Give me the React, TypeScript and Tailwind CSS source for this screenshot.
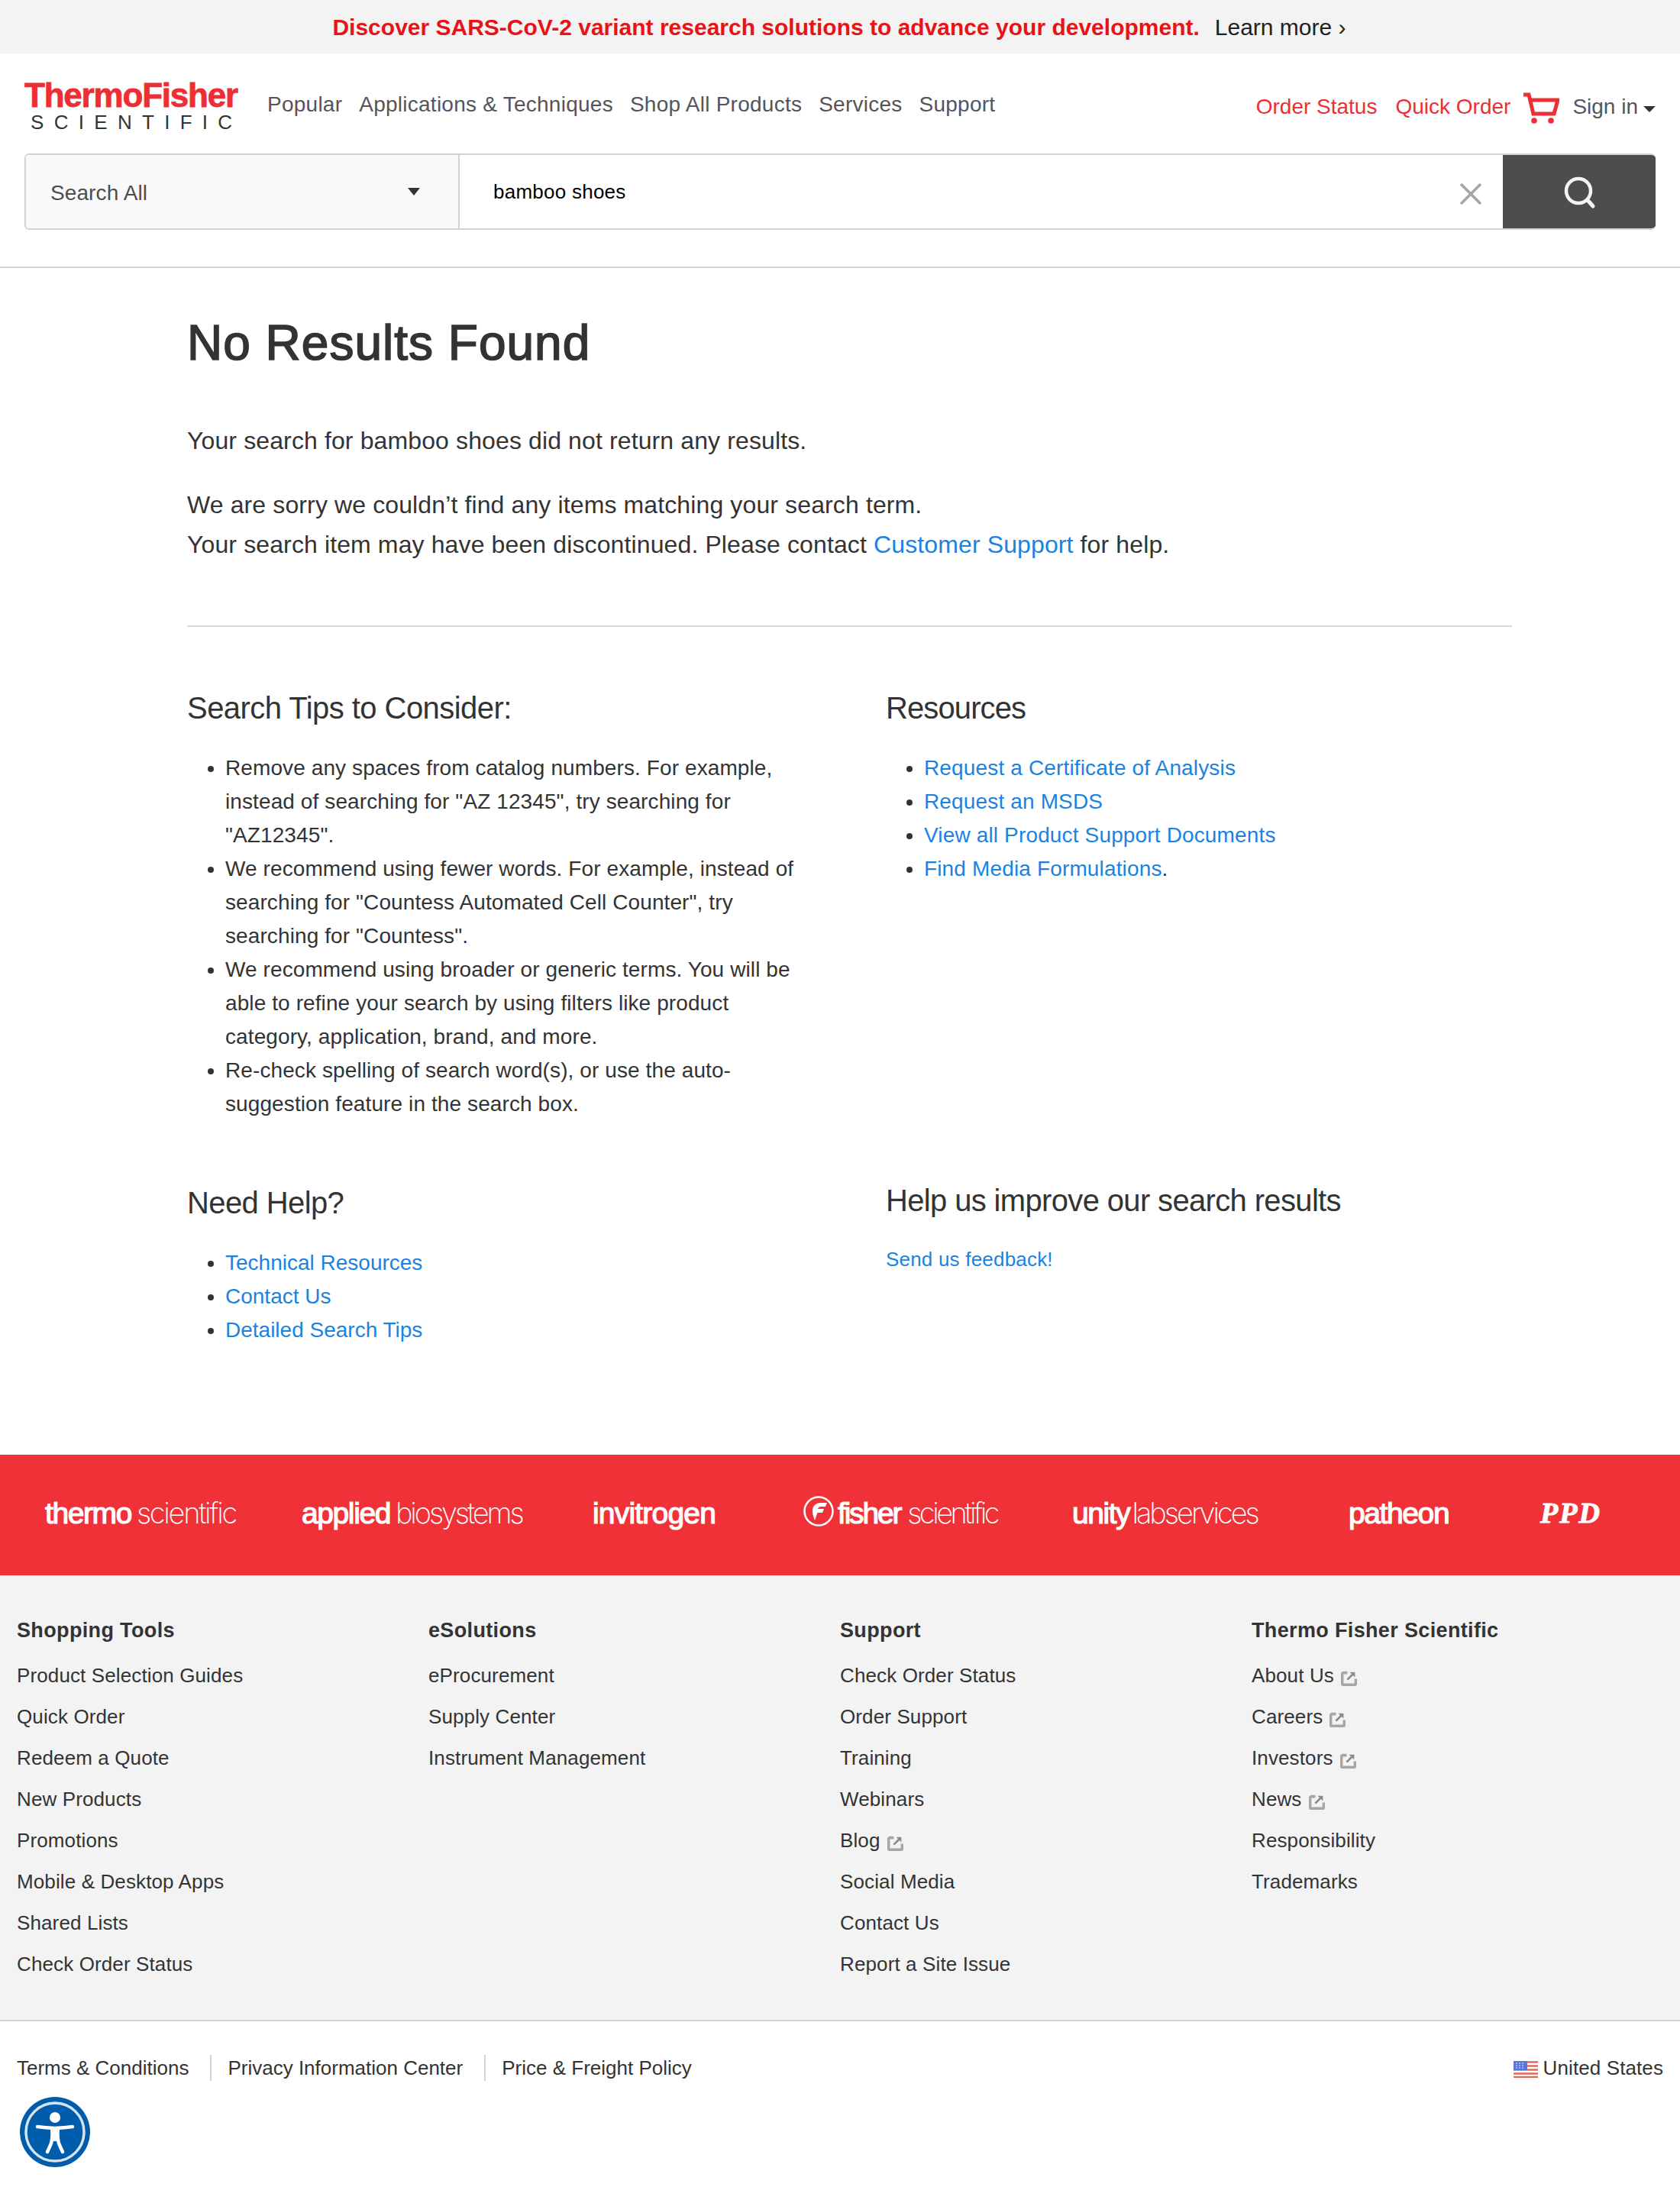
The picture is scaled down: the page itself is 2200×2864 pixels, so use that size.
import React from 'react';

const sans = { fontFamily: '"Liberation Sans", Arial, sans-serif' };

const tips = [
  ['Remove any spaces from catalog numbers. For example,', 'instead of searching for "AZ 12345", try searching for', '"AZ12345".'],
  ['We recommend using fewer words. For example, instead of', 'searching for "Countess Automated Cell Counter", try', 'searching for "Countess".'],
  ['We recommend using broader or generic terms. You will be', 'able to refine your search by using filters like product', 'category, application, brand, and more.'],
  ['Re-check spelling of search word(s), or use the auto-', 'suggestion feature in the search box.'],
];

const footerCols: { title: string; links: [string, boolean?][] }[] = [
  {
    title: 'Shopping Tools',
    links: [['Product Selection Guides'], ['Quick Order'], ['Redeem a Quote'], ['New Products'], ['Promotions'], ['Mobile & Desktop Apps'], ['Shared Lists'], ['Check Order Status']],
  },
  { title: 'eSolutions', links: [['eProcurement'], ['Supply Center'], ['Instrument Management']] },
  {
    title: 'Support',
    links: [['Check Order Status'], ['Order Support'], ['Training'], ['Webinars'], ['Blog', true], ['Social Media'], ['Contact Us'], ['Report a Site Issue']],
  },
  {
    title: 'Thermo Fisher Scientific',
    links: [['About Us', true], ['Careers', true], ['Investors', true], ['News', true], ['Responsibility'], ['Trademarks']],
  },
];

const ExternalIcon = () => (
  <svg width="21" height="21" viewBox="0 0 20 20" fill="none" className="ml-[9px] mt-[7px] inline-block shrink-0">
    <path d="M8 3.500H3.500a2 2 0 0 0-2 2v11a2 2 0 0 0 2 2h13a2 2 0 0 0 2-2V11" stroke="#a6a6a6" strokeWidth="3.500" />
    <path d="M8 12l7-7" stroke="#8a8a8a" strokeWidth="2.500" />
    <path d="M11 2.500h6.500V9z" fill="#8a8a8a" />
  </svg>
);

const Brand = ({ bold, light, className, boldClass, lightClass }: { bold: string; light?: string; className: string; boldClass: string; lightClass?: string }) => (
  <div className={`flex items-baseline whitespace-nowrap text-[39px] leading-none text-white ${className}`}>
    <span className={`[-webkit-text-stroke:1.2px_#fff] ${boldClass}`} style={sans}>{bold}</span>
    {light && <span className={`font-[Inter] text-[38px] font-extralight ${lightClass}`}>{light}</span>}
  </div>
);

const App: React.FC = () => {
  return (
    <div className="relative h-[2864px] w-[2200px] overflow-hidden bg-white text-[#333]" style={sans}>
      <div className="flex h-[70px] items-center justify-center bg-[#f3f3f3] pr-[2px]">
        <span className="text-[30px] font-bold text-[#e71316]">Discover SARS-CoV-2 variant research solutions to advance your development.</span>
        <span className="ml-[20px] text-[30px] text-[#222]">Learn more ›</span>
      </div>

      <header className="border-b-2 border-[#d2d2d2] px-[32px] pb-[48px]">
        <div className="flex h-[131px] items-start">
          <div className="mt-[35px] w-[281px] shrink-0">
            <div className="whitespace-nowrap text-[44px] font-bold leading-[40px] tracking-[-1.2px] text-[#ee2e36] [-webkit-text-stroke:0.8px_#ee2e36]">ThermoFisher</div>
            <div className="mt-[3px] whitespace-nowrap pl-[8px] text-[26px] leading-[24px] tracking-[13.3px] text-[#333]">SCIENTIFIC</div>
          </div>
          <nav className="ml-[37px] mt-[50px] flex gap-[22px] text-[28px] leading-[34px] tracking-[0.25px] text-[#54545c]">
            <span>Popular</span>
            <span>Applications &amp; Techniques</span>
            <span>Shop All Products</span>
            <span>Services</span>
            <span>Support</span>
          </nav>
          <div className="ml-auto mt-[50px] flex items-start text-[28px] leading-[40px]">
            <span className="text-[#ee2e36]">Order Status</span>
            <span className="ml-[24px] text-[#ee2e36]">Quick Order</span>
            <svg width="48" height="42" viewBox="0 0 48 42" fill="none" className="ml-[16px] mt-[1px]">
              <path d="M1 3h7l6 25h27l5-18H9" stroke="#ee2e36" strokeWidth="5" />
              <circle cx="15" cy="37" r="3.800" fill="#ee2e36" />
              <circle cx="37" cy="37" r="3.800" fill="#ee2e36" />
            </svg>
            <span className="ml-[17px] text-[#54545c]">Sign in</span>
            <span className="ml-[7px] mt-[19px] h-0 w-0 border-x-[8px] border-t-[8px] border-x-transparent border-t-[#333]" />
          </div>
        </div>

        <div className="flex h-[100px] overflow-hidden rounded-[6px] border-2 border-r-0 border-[#d2d2d2]">
          <div className="flex w-[568px] shrink-0 items-center justify-between border-r-2 border-[#d2d2d2] bg-[#f9f9f9] pl-[32px] pr-[50px]">
            <span className="mt-[3px] text-[28px] tracking-[0.1px] text-[#4d4d4d]">Search All</span>
            <span className="h-0 w-0 border-x-[8px] border-t-[10px] border-x-transparent border-t-[#333]" />
          </div>
          <div className="flex flex-1 items-center justify-between pl-[44px] pr-[27px] text-[26px] tracking-[0.25px] text-black">
            <span>bamboo shoes</span>
            <svg width="30" height="30" viewBox="0 0 30 30" className="mt-[6px]">
              <path d="M2 2l26 26M28 2L2 28" stroke="#a4a4a4" strokeWidth="3.500" />
            </svg>
          </div>
          <div className="-my-[2px] flex w-[200px] shrink-0 items-center justify-center bg-[#4d4d4d]">
            <svg width="44" height="46" viewBox="0 0 44 46" fill="none">
              <circle cx="21" cy="22" r="16" stroke="#f4f4f4" strokeWidth="4.500" />
              <path d="M33 34l7 8" stroke="#f4f4f4" strokeWidth="5" strokeLinecap="round" />
            </svg>
          </div>
        </div>
      </header>

      <main className="ml-[245px] w-[1735px]">
        <h1 className="mt-[60px] text-[64px] font-normal leading-[76px] tracking-[1px] text-[#333] [-webkit-text-stroke:1.6px_#333]">No Results Found</h1>
        <p className="mt-[64px] text-[32px] leading-[52px] tracking-[0.12px]">Your search for bamboo shoes did not return any results.</p>
        <p className="mt-[32px] text-[32px] leading-[52px] tracking-[0.12px]">
          We are sorry we couldn’t find any items matching your search term.
          <br />
          Your search item may have been discontinued. Please contact <span className="text-[#1a83e2]">Customer Support</span> for help.
        </p>
        <div className="mt-[80px] h-[2px] bg-[#d9d9d9]" />

        <div className="mt-[78px] grid grid-cols-[915px_1fr]">
          <div>
            <h2 className="text-[40px] leading-[56px] tracking-[-0.55px]">Search Tips to Consider:</h2>
            <ul className="mt-[29px] list-disc pl-[50px] text-[28px] leading-[44px] tracking-[0.1px] marker:text-[#333]">
              {tips.map((lines, i) => (
                <li key={i}>
                  {lines.map((l, j) => (
                    <div key={j} className="whitespace-nowrap">{l}</div>
                  ))}
                </li>
              ))}
            </ul>
            <h2 className="mt-[79px] text-[40px] leading-[56px] tracking-[-0.6px]">Need Help?</h2>
            <ul className="mt-[29px] list-disc pl-[50px] text-[28px] leading-[44px] text-[#1a83e2] marker:text-[#333]">
              <li>Technical Resources</li>
              <li>Contact Us</li>
              <li>Detailed Search Tips</li>
            </ul>
          </div>
          <div>
            <h2 className="text-[40px] leading-[56px] tracking-[-0.9px]">Resources</h2>
            <ul className="mt-[29px] h-[560px] list-disc pl-[50px] text-[28px] leading-[44px] tracking-[0.15px] text-[#1a83e2] marker:text-[#333]">
              <li>Request a Certificate of Analysis</li>
              <li>Request an MSDS</li>
              <li>View all Product Support Documents</li>
              <li>Find Media Formulations<span className="text-[#333]">.</span></li>
            </ul>
            <h2 className="text-[40px] leading-[56px] tracking-[-0.65px]">Help us improve our search results</h2>
            <div className="mt-[29px] text-[26px] leading-[40px] tracking-[0.2px] text-[#1a83e2]">Send us feedback!</div>
          </div>
        </div>
      </main>

      <div className="absolute inset-x-0 top-[1905px]">
        <div className="flex h-[158px] items-center bg-[#f03238] pb-[6px] pl-[59px]">
          <Brand bold="thermo" light="scientific" className="w-[336px]" boldClass="tracking-[-1.4px]" lightClass="ml-[7px] tracking-[-2.3px]" />
          <Brand bold="applied" light="biosystems" className="w-[381px]" boldClass="tracking-[-1.4px]" lightClass="ml-[7px] tracking-[-3.1px]" />
          <Brand bold="invitrogen" className="w-[276px]" boldClass="tracking-[-0.8px]" />
          <svg width="40" height="40" viewBox="0 0 40 40" fill="none" className="mb-[4px] mr-[5px]">
            <circle cx="20" cy="20" r="18.500" stroke="#fff" strokeWidth="2.500" />
            <path d="M12 20c0-7 4-11 11-11h8l-2 5h-6c-2 0-3.500 1-4 3h8l-2 5h-6.500l-3.500 10-2.500-7z" fill="#fff" />
          </svg>
          <Brand bold="fisher" light="scientific" className="w-[307px]" boldClass="tracking-[-2.2px]" lightClass="ml-[9px] tracking-[-3.5px]" />
          <Brand bold="unity" light="labservices" className="w-[362px]" boldClass="tracking-[-1.4px]" lightClass="ml-[3px] tracking-[-3px]" />
          <Brand bold="patheon" className="w-[251px]" boldClass="tracking-[-1.4px]" />
          <span className="text-[38px] font-bold italic tracking-[2px] text-white [-webkit-text-stroke:1px_#fff]" style={{ fontFamily: '"Liberation Serif", serif' }}>PPD</span>
        </div>

        <footer className="grid h-[582px] grid-cols-[repeat(4,539px)] bg-[#f3f3f3] pl-[22px] pt-[55px]">
          {footerCols.map((col) => (
            <div key={col.title}>
              <div className="text-[27px] font-bold leading-[34px] tracking-[0.35px]">{col.title}</div>
              <ul className="mt-[15px] text-[26px] leading-[54px] tracking-[0.12px]">
                {col.links.map(([label, ext]) => (
                  <li key={label} className="flex items-center">
                    {label}
                    {ext && <ExternalIcon />}
                  </li>
                ))}
              </ul>
            </div>
          ))}
        </footer>

        <div className="flex items-center justify-between border-t-2 border-[#d2d2d2] px-[22px] pt-[44px] text-[26px] leading-[34px]">
          <div className="flex items-center">
            <span className="border-r-2 border-[#d2d2d2] pr-[28px]">Terms &amp; Conditions</span>
            <span className="border-r-2 border-[#d2d2d2] px-[21px] pr-[28px]">Privacy Information Center</span>
            <span className="pl-[21px]">Price &amp; Freight Policy</span>
          </div>
          <div className="flex items-center tracking-[0.1px]">
            <svg width="32" height="22" viewBox="0 0 32 22" className="mr-[7px] mt-[4px]">
              <rect width="32" height="22" fill="#fff" />
              <path d="M0 1.500h32M0 6.500h32M0 11.500h32M0 16.500h32M0 21h32" stroke="#dd6b5a" strokeWidth="2.500" />
              <rect width="18" height="12" fill="#5577dd" />
              <path d="M3 3h12M3 6h12M3 9h12" stroke="#b6c8f4" strokeWidth="1.500" strokeDasharray="2 2" />
            </svg>
            United States
          </div>
        </div>
      </div>

      <div className="absolute left-[26px] top-[2746px] flex h-[92px] w-[92px] items-center justify-center rounded-full bg-[#005dab]">
        <svg width="80" height="80" viewBox="0 0 80 80" fill="none">
          <circle cx="40" cy="40" r="38" stroke="#d9e4f3" strokeWidth="3.500" />
          <circle cx="40" cy="21" r="7" fill="#fff" />
          <path d="M17 33c8 1 15 2 23 2s15-1 23-2" stroke="#fff" strokeWidth="4.500" strokeLinecap="round" />
          <path d="M36 35c1 8 1 13-1 20l-5 11M44 35c-1 8-1 13 1 20l5 11" stroke="#fff" strokeWidth="4.500" strokeLinecap="round" />
          <path d="M37 36h6v16h-6z" fill="#fff" />
        </svg>
      </div>
    </div>
  );
};

export default App;
